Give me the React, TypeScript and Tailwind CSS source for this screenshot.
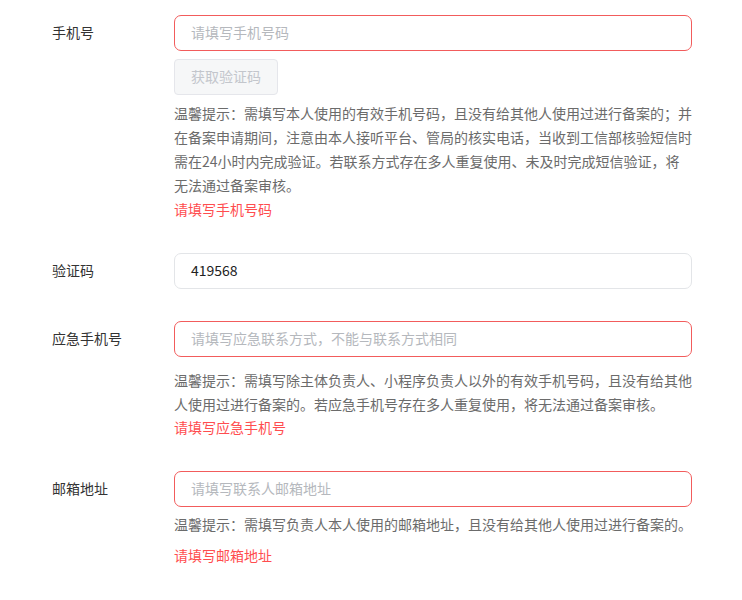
import React from "react";

const font = { fontFamily: '"Noto Sans CJK SC", "Noto Sans", sans-serif' };

function Label({ children }: { children: React.ReactNode }) {
  return (
    <div className="w-[122px] shrink-0 h-[34px] flex items-center text-[14px] leading-none text-[#333333]">
      {children}
    </div>
  );
}

function Input({ placeholder, value, error }: { placeholder?: string; value?: string; error?: boolean }) {
  return (
    <div
      className={`h-[36px] w-[518px] rounded-[7px] border flex items-center px-[16px] pb-[3px] text-[14px] leading-none ${
        error ? "border-[#f25c5c]" : "border-[#e3e5e8]"
      }`}
    >
      {value ? (
        <span className="text-[#222222]">{value}</span>
      ) : (
        <span className="text-[#b5b8bd]">{placeholder}</span>
      )}
    </div>
  );
}

function Hint({ children, className = "" }: { children: React.ReactNode; className?: string }) {
  return <div className={`w-[518px] text-[14px] leading-[24px] text-[#6b6b6b] ${className}`}>{children}</div>;
}

function Err({ children, className = "" }: { children: React.ReactNode; className?: string }) {
  return <div className={`text-[14px] leading-[20px] text-[#ff4d4f] ${className}`}>{children}</div>;
}

export default function App() {
  return (
    <div className="w-[742px] h-[600px] bg-white pl-[52px] pt-[15px] overflow-hidden" style={font}>
      <div className="flex">
        <Label>手机号</Label>
        <div className="flex flex-col">
          <Input placeholder="请填写手机号码" error />
          <div className="mt-[8px] h-[36px] w-[104px] rounded-[4px] border border-[#e5e6eb] bg-[#f6f7f8] flex items-center justify-center pb-[2px] text-[14px] leading-none text-[#c3c6cc]">
            获取验证码
          </div>
          <Hint className="mt-[6px]">
            温馨提示：需填写本人使用的有效手机号码，且没有给其他人使用过进行备案的；并在备案申请期间，注意由本人接听平台、管局的核实电话，当收到工信部核验短信时需在24小时内完成验证。若联系方式存在多人重复使用、未及时完成短信验证，将无法通过备案审核。
          </Hint>
          <Err className="mt-[2px]">请填写手机号码</Err>
        </div>
      </div>

      <div className="flex mt-[34px]">
        <Label>验证码</Label>
        <Input value="419568" />
      </div>

      <div className="flex mt-[32px]">
        <Label>应急手机号</Label>
        <div className="flex flex-col">
          <Input placeholder="请填写应急联系方式，不能与联系方式相同" error />
          <Hint className="mt-[11px]">
            温馨提示：需填写除主体负责人、小程序负责人以外的有效手机号码，且没有给其他人使用过进行备案的。若应急手机号存在多人重复使用，将无法通过备案审核。
          </Hint>
          <Err className="mt-[1px]">请填写应急手机号</Err>
        </div>
      </div>

      <div className="flex mt-[34px]">
        <Label>邮箱地址</Label>
        <div className="flex flex-col">
          <Input placeholder="请填写联系人邮箱地址" error />
          <Hint className="mt-[5px]">
            温馨提示：需填写负责人本人使用的邮箱地址，且没有给其他人使用过进行备案的。
          </Hint>
          <Err className="mt-[9px]">请填写邮箱地址</Err>
        </div>
      </div>
    </div>
  );
}
